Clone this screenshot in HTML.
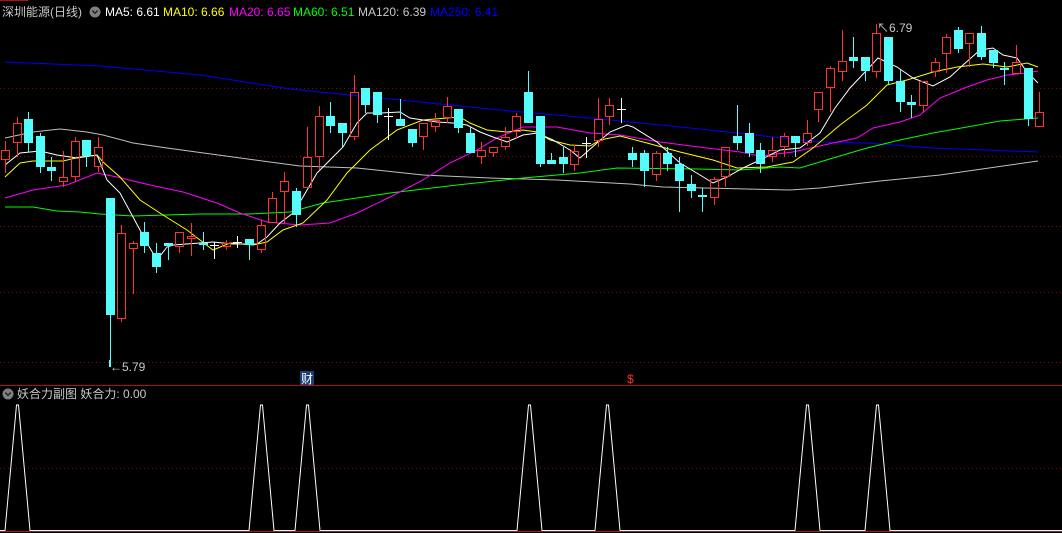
<!DOCTYPE html>
<html><head><meta charset="utf-8"><style>
html,body{margin:0;padding:0;background:#000;width:1062px;height:533px;overflow:hidden}
svg{display:block}
text{font-family:"Liberation Sans","Noto Sans CJK SC",sans-serif;font-size:12px}
</style></head><body>
<svg id="s" width="1062" height="533" xmlns="http://www.w3.org/2000/svg">
<rect width="1062" height="533" fill="#000"/>
<line x1="0" y1="0.5" x2="28" y2="0.5" stroke="#b01010"/>
<g stroke="#7a1010" stroke-dasharray="1,3" stroke-width="1">
<line x1="0" y1="88.5" x2="1062" y2="88.5"/>
<line x1="0" y1="156.5" x2="1062" y2="156.5"/>
<line x1="0" y1="226.5" x2="1062" y2="226.5"/>
<line x1="0" y1="292.5" x2="1062" y2="292.5"/>
<line x1="0" y1="362.5" x2="1062" y2="362.5"/>
<line x1="0" y1="468.5" x2="1062" y2="468.5"/>
</g>
<line x1="0" y1="385.5" x2="1062" y2="385.5" stroke="#b01010"/>
<line x1="0" y1="531.5" x2="1062" y2="531.5" stroke="#c01010"/>
<g id="lines" fill="none" stroke-width="1"></g>
<g id="cand"></g>
<g id="sub" fill="none" stroke="#fff" stroke-width="1"></g>
<text x="2" y="16" fill="#c8c8c8">深圳能源(日线)</text>
<circle cx="95" cy="12" r="5.5" fill="#808080"/>
<path d="M92.3 10.5 L95 13.3 L97.7 10.5" stroke="#222" stroke-width="1.4" fill="none"/>
<text x="105" y="16" fill="#fff">MA5: 6.61</text>
<text x="163" y="16" fill="#ffff00">MA10: 6.66</text>
<text x="229" y="16" fill="#ff00ff">MA20: 6.65</text>
<text x="293" y="16" fill="#00ff00">MA60: 6.51</text>
<text x="358" y="16" fill="#c8c8c8">MA120: 6.39</text>
<text x="430" y="16" fill="#0000ff">MA250: 6.41</text>
<line x1="109.5" y1="360" x2="109.5" y2="367" stroke="#54fcfc"/>
<text x="110" y="371" fill="#c8c8c8">←5.79</text>
<text x="877" y="32" fill="#c8c8c8">↖6.79</text>
<rect x="300" y="371" width="14" height="14" fill="#1a3e78"/>
<text x="301" y="383" fill="#fff">财</text>
<text x="627" y="383" fill="#ff3030" font-size="11">$</text>
<circle cx="8" cy="394" r="5.5" fill="#808080"/>
<path d="M5.3 392.5 L8 395.3 L10.7 392.5" stroke="#222" stroke-width="1.4" fill="none"/>
<text x="17" y="398" fill="#c8c8c8">妖合力副图  妖合力: 0.00</text>
</svg>
<script>
var D=[
"r 150 160 141 173","r 123 143 117 157","c 119 143 112 152","c 136 167 133 173","c 167 171 157 181",
"r 177 182 151 187","r 141 177 137 182","c 140 156 140 167","r 147 167 137 172","c 198 315 198 367",
"r 233 319 225 322","r 243 249 241 294","c 232 246 222 253","c 253 267 243 273","c 243 246 243 260",
"r 232 247 232 253","r 236 239 223 256","c 243 245 232 250","w 245 245 242 259","r 243 247 240 250",
"w 242 242 236 248","c 239 245 239 260","r 225 250 220 253","r 198 223 192 223","r 181 192 172 223",
"c 191 215 188 227","r 157 188 127 188","r 116 157 106 170","c 116 126 102 133","c 123 133 123 148",
"r 92 137 75 140","c 88 105 88 113","c 92 115 92 123","w 116 116 108 140","c 119 126 99 126",
"c 129 143 129 147","r 123 137 123 150","r 120 127 113 132","r 106 118 97 123","c 109 128 109 133",
"c 133 153 127 153","r 150 157 142 164","r 147 153 147 157","r 137 147 127 150","r 116 132 113 139",
"c 92 123 71 123","c 116 164 116 167","c 160 164 153 164","c 157 164 147 173","r 151 165 145 171",
"w 143 143 137 158","r 119 141 98 147","r 105 117 98 125","w 109 109 98 123","c 153 160 147 167",
"c 153 171 150 187","r 153 175 151 181","c 153 164 147 171","c 164 181 157 212","c 184 191 175 198",
"c 195 197 188 212","r 179 198 177 205","r 147 177 147 187","c 136 143 105 150","c 133 153 123 157",
"c 150 164 143 173","r 150 157 137 162","r 136 147 133 157","c 136 143 136 157","r 133 143 120 146",
"r 92 110 92 122","r 68 88 66 112","r 61 72 30 81","c 57 61 37 68","c 57 71 57 81",
"r 33 72 24 78","c 37 81 37 85","c 81 102 70 112","c 102 105 95 118","r 81 106 81 112",
"r 62 72 58 77","r 37 54 34 73","c 30 49 27 53","r 33 44 33 67","c 33 57 26 60",
"c 50 63 50 68","c 68 70 62 85","r 62 74 45 74","c 68 119 68 126","r 112 127 92 127"];
var g=document.getElementById('cand'),h='';
D.forEach(function(s,i){var p=s.split(' '),t=p[0],a=+p[1],b=+p[2],hi=+p[3],lo=+p[4];
var x=Math.round(5+i*11.62);var cx=x+0.5;
if(t=='c'){h+='<line x1="'+cx+'" y1="'+hi+'" x2="'+cx+'" y2="'+lo+'" stroke="#54fcfc"/>';
h+='<rect x="'+(x-4)+'" y="'+a+'" width="9" height="'+Math.max(b-a,2)+'" fill="#54fcfc"/>';}
else if(t=='r'){h+='<line x1="'+cx+'" y1="'+hi+'" x2="'+cx+'" y2="'+a+'" stroke="#ff3232"/><line x1="'+cx+'" y1="'+b+'" x2="'+cx+'" y2="'+lo+'" stroke="#ff3232"/>';
h+='<rect x="'+(x-3.5)+'" y="'+(a+0.5)+'" width="8" height="'+Math.max(b-a-1,1)+'" fill="none" stroke="#ff3232"/>';}
else{h+='<line x1="'+cx+'" y1="'+hi+'" x2="'+cx+'" y2="'+lo+'" stroke="#fff"/><line x1="'+(x-4)+'" y1="'+(a+0.5)+'" x2="'+(x+5)+'" y2="'+(a+0.5)+'" stroke="#fff"/>';}
});
g.innerHTML=h;
var L={
"#0000ff":"5,62 100,66 200,75 290,89 400,100 500,110 590,118 700,129 820,142 867,143 933,148 1038,152",
"#c0c0c0":"5,138 33,132 60,129 87,132 103,135 133,143 167,148 233,157 300,166 357,168 423,175 490,178 557,180 630,184 663,187 747,189 790,190 820,188 880,181 940,175 1038,161",
"#00ff00":"5,207 33,207 57,211 80,212 100,214 133,216 200,214 250,214 290,212 323,203 390,193 457,185 523,178 580,173 617,168 697,169 740,170 780,167 800,168 833,158 867,148 900,140 933,133 967,127 1000,121 1038,118",
"#ff00ff":"5,198 33,190 67,185 97,173 117,177 150,185 183,192 217,203 240,213 267,222 300,225 330,223 357,213 390,197 423,180 450,163 477,150 497,138 523,127 557,127 590,133 620,135 660,142 707,148 740,152 760,156 793,152 833,143 857,138 873,128 900,122 920,115 940,98 967,87 987,80 1007,75 1027,73 1038,71",
"#ffff00":"5,177 20,163 33,161 63,161 80,157 97,155 103,162 120,177 140,200 163,215 187,230 213,250 230,243 253,245 267,242 283,230 303,223 327,200 347,173 370,150 397,130 423,120 447,118 460,117 470,123 487,130 507,132 523,130 537,132 550,140 570,145 590,146 600,140 620,136 647,143 680,152 713,160 737,168 767,167 793,162 813,148 840,125 867,105 887,85 907,80 933,72 957,67 983,64 1007,67 1027,63 1038,67",
"#ffffff":"5,165 20,153 40,151 57,155 77,158 97,155 107,180 120,193 133,217 147,243 157,260 167,247 173,245 213,242 233,244 257,244 267,237 280,223 293,213 303,197 317,173 330,160 343,147 357,123 367,113 380,113 400,112 410,118 423,120 437,122 453,123 467,125 480,132 493,137 507,142 523,135 537,133 553,140 570,150 580,158 597,143 610,132 627,125 633,127 657,142 680,163 700,175 713,183 727,177 743,168 760,160 780,150 800,148 820,133 835,108 850,88 865,72 878,58 897,67 913,78 933,86 950,77 963,65 980,50 993,48 1003,55 1017,58 1027,72 1038,83"};
var lg=document.getElementById('lines'),lh='';
for(var c in L){lh+='<polyline points="'+L[c]+'" stroke="'+c+'"/>';}
lg.innerHTML=lh;
var P=[17,261,307,529,607,807,877],d='M0 530.5';
P.forEach(function(p){d+=' L'+(p-12)+' 530.5 L'+(p-0.5)+' 405 L'+(p+1.5)+' 405 L'+(p+13)+' 530.5';});
d+=' L1062 530.5';
document.getElementById('sub').innerHTML='<path d="'+d+'"/>';
</script>
</body></html>
